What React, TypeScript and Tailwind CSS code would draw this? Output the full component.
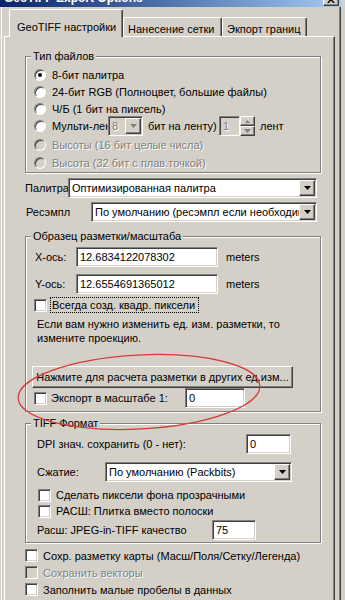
import type { ReactNode } from 'react';

// Classic Win2000 "GeoTIFF Export Options" dialog, clipped to the visible area.

const sunken =
  'border border-t-[#808080] border-l-[#808080] border-b-white border-r-white shadow-[inset_1px_1px_0_#404040,inset_-1px_-1px_0_#d4d0c8]';
const raised =
  'border border-t-white border-l-white border-b-[#404040] border-r-[#404040] shadow-[inset_-1px_-1px_0_#808080]';
const grayText = 'text-[#808080] [text-shadow:1px_1px_0_#fff]';

export default function App() {
  return (
    <div className="relative h-[600px] w-[345px] overflow-hidden bg-[#d4d0c8] font-['Liberation_Sans',Arial,sans-serif] text-[11px] leading-[14px] text-black">
      <div className="h-[600px] w-[341px] shadow-[inset_1px_0_0_#d4d0c8,inset_2px_0_0_#fff,inset_-1px_0_0_#404040,inset_-2px_0_0_#808080]">
        <TitleBar />

        <div className="flex h-[30px] items-end pl-[9px]">
          <Tab selected width="w-[114px]">GeoTIFF настройки</Tab>
          <Tab width="w-[99px]">Нанесение сетки</Tab>
          <Tab width="w-[85px]">Экпорт границ</Tab>
        </div>

        <div className="relative -mt-[1px] ml-[4px] h-[570px] w-[331px] border border-t-white border-l-white border-r-[#404040] border-b-[#404040] shadow-[inset_-1px_0_0_#808080]">
          <Group title="Тип файлов" className="mt-[12px] pb-[1px]">
            <div className="pt-[4px] pl-[8px]">
              <RadioRow h="h-[16px]" checked>8-бит палитра</RadioRow>
              <RadioRow h="h-[17px]">24-бит RGB (Полноцвет, большие файлы)</RadioRow>
              <RadioRow h="h-[17px]">Ч/Б (1 бит на пиксель)</RadioRow>
              <div className="flex h-[18px] items-center">
                <Radio />
                <span className="ml-[6px] w-[56px] overflow-hidden whitespace-nowrap">Мульти-ленточный</span>
                <Combo value="8" disabled className="w-[35px]" />
                <span className="ml-[5px] w-[71px] whitespace-nowrap">бит на ленту)</span>
                <div className={`flex h-[20px] w-[21px] items-center pl-[3px] bg-[#d4d0c8] ${sunken}`}>
                  <span className={grayText}>1</span>
                </div>
                <div className="flex h-[20px] w-[15px] flex-col">
                  <span className={`flex flex-1 items-center justify-center bg-[#d4d0c8] ${raised}`}>
                    <Arrow up gray />
                  </span>
                  <span className={`flex flex-1 items-center justify-center bg-[#d4d0c8] ${raised}`}>
                    <Arrow gray />
                  </span>
                </div>
                <span className="ml-[5px]">лент</span>
              </div>
              <RadioRow h="h-[19px]" disabled>Высоты (16 бит целые числа)</RadioRow>
              <RadioRow h="h-[17px]" disabled>Высота (32 бит с плав.точкой)</RadioRow>
            </div>
          </Group>

          <div className="mt-[5px] ml-[20px] flex h-[20px] w-[292px] items-center">
            <span className="w-[43px] shrink-0 whitespace-nowrap">Палитра</span>
            <Combo value="Оптимизированная палитра" className="min-w-0 flex-1" />
          </div>
          <div className="mt-[4px] ml-[21px] flex h-[20px] w-[291px] items-center">
            <span className="w-[65px] shrink-0">Ресэмпл</span>
            <Combo value="По умолчанию (ресэмпл если необходимо)" className="min-w-0 flex-1" />
          </div>

          <Group title="Образец разметки/масштаба" className="mt-[7px] pb-[3px]">
            <div className="pl-[9px]">
              <div className="mt-[4px] flex h-[20px] items-center">
                <span className="w-[41px]">X-ось:</span>
                <Field value="12.6834122078302" className="w-[142px]" />
                <span className="ml-[8px]">meters</span>
              </div>
              <div className="mt-[7px] flex h-[20px] items-center">
                <span className="w-[41px]">Y-ось:</span>
                <Field value="12.6554691365012" className="w-[142px]" />
                <span className="ml-[8px]">meters</span>
              </div>
              <div className="mt-[3px] -ml-[1px] flex h-[16px] items-center">
                <Check />
                <span className="ml-[3px] w-[149px] overflow-hidden whitespace-nowrap border border-dotted border-black px-[1px]">
                  Всегда созд. квадр. пиксели
                </span>
              </div>
              <p className="mt-[4px] pl-[2px]">
                Если вам нужно изменить ед. изм. разметки, то
                <br />
                измените проекцию.
              </p>
              <button
                className={`mt-[21px] -ml-[3px] flex h-[22px] w-[261px] items-center justify-center overflow-hidden whitespace-nowrap bg-[#d4d0c8] ${raised}`}
              >
                Нажмите для расчета разметки в других ед.изм...
              </button>
              <div className="-ml-[1px] flex h-[20px] items-center">
                <Check />
                <span className="ml-[4px] w-[134px]">Экспорт в масштабе 1:</span>
                <Field value="0" className="w-[60px]" />
              </div>
            </div>
          </Group>

          <Group title="TIFF Формат" className="mt-[4px] pb-[2px]">
            <div className="pl-[11px]">
              <div className="mt-[3px] flex h-[21px] items-center">
                <span className="w-[209px]">DPI знач. сохранить (0 - нет):</span>
                <Field value="0" className="w-[45px]" />
              </div>
              <div className="mt-[8px] flex h-[20px] items-center">
                <span className="w-[68px]">Сжатие:</span>
                <Combo value="По умолчанию (Packbits)" className="w-[187px]" />
              </div>
              <div className="mt-[5px] pl-[1px]">
                <CheckRow h="h-[16px]">Сделать пиксели фона прозрачными</CheckRow>
                <CheckRow h="h-[16px]">РАСШ: Плитка вместо полоски</CheckRow>
              </div>
              <div className="mt-[1px] flex h-[20px] items-center">
                <span className="w-[175px]">Расш: JPEG-in-TIFF качество</span>
                <Field value="75" className="w-[44px]" />
              </div>
            </div>
          </Group>

          <div className="mt-[4px] ml-[20px]">
            <CheckRow h="h-[17px]">Сохр. разметку карты (Масш/Поля/Сетку/Легенда)</CheckRow>
            <CheckRow h="h-[17px]" disabled>Сохранить векторы</CheckRow>
            <CheckRow h="h-[17px]">Заполнить малые пробелы в данных</CheckRow>
            <CheckRow h="h-[17px]">Сохранить TFW (World) файл</CheckRow>
          </div>
        </div>
      </div>

      {/* someone's red pen mark around the scale export controls */}
      <svg className="pointer-events-none absolute left-0 top-0" width="345" height="600">
        <ellipse
          cx="139"
          cy="392"
          rx="121"
          ry="37"
          transform="rotate(-3 139 392)"
          fill="none"
          stroke="#d23a3a"
          strokeWidth="1.2"
        />
      </svg>
    </div>
  );
}

function TitleBar() {
  return (
    <div className="flex h-[7px] overflow-hidden bg-gradient-to-r from-[#0a246a] to-[#a6caf0] pl-[4px] pr-[2px]">
      <span className="-mt-[9px] flex-1 whitespace-nowrap text-[12px] font-bold leading-[14px] text-white">
        GeoTIFF Export Options
      </span>
      <span className={`-mt-[8px] flex h-[14px] w-[16px] items-center justify-center bg-[#d4d0c8] ${raised}`}>
        <svg width="8" height="7" viewBox="0 0 8 7">
          <path d="M0 0h2l2 2.5L6 0h2L5 3.5 8 7H6L4 4.5 2 7H0l3-3.5z" fill="#000" />
        </svg>
      </span>
    </div>
  );
}

function Tab({ children, selected, width }: { children: ReactNode; selected?: boolean; width: string }) {
  return (
    <div
      className={`${width} rounded-t-[2px] border border-b-0 border-t-white border-l-white border-r-[#404040] bg-[#d4d0c8] whitespace-nowrap shadow-[inset_-1px_0_0_#808080] ${
        selected ? 'relative z-10 h-[28px] pl-[7px] pt-[10px]' : 'h-[20px] pl-[4px] pt-[4px]'
      }`}
    >
      {children}
    </div>
  );
}

function Group({ title, className, children }: { title: string; className?: string; children: ReactNode }) {
  return (
    <fieldset
      className={`ml-[20px] w-[296px] border border-[#808080] shadow-[inset_1px_1px_0_#fff,1px_1px_0_#fff] ${className ?? ''}`}
    >
      <legend className="ml-[5px] bg-[#d4d0c8] px-[2px] leading-[14px]">{title}</legend>
      {children}
    </fieldset>
  );
}

function Radio({ checked, disabled }: { checked?: boolean; disabled?: boolean }) {
  return (
    <span
      className={`flex h-[12px] w-[12px] shrink-0 items-center justify-center rounded-full border border-t-[#808080] border-l-[#808080] border-b-white border-r-white shadow-[inset_1px_1px_0_#404040] ${
        disabled ? 'bg-[#d4d0c8]' : 'bg-white'
      }`}
    >
      {checked && <span className="h-[4px] w-[4px] rounded-full bg-black" />}
    </span>
  );
}

function RadioRow({ children, h, checked, disabled }: { children: ReactNode; h: string; checked?: boolean; disabled?: boolean }) {
  return (
    <div className={`flex ${h} items-center`}>
      <Radio checked={checked} disabled={disabled} />
      <span className={`ml-[6px] whitespace-nowrap ${disabled ? grayText : ''}`}>{children}</span>
    </div>
  );
}

function Check({ disabled }: { disabled?: boolean }) {
  return <span className={`h-[13px] w-[13px] shrink-0 ${sunken} ${disabled ? 'bg-[#d4d0c8]' : 'bg-white'}`} />;
}

function CheckRow({ children, h, disabled }: { children: ReactNode; h: string; disabled?: boolean }) {
  return (
    <div className={`flex ${h} items-center`}>
      <Check disabled={disabled} />
      <span className={`ml-[5px] whitespace-nowrap ${disabled ? grayText : ''}`}>{children}</span>
    </div>
  );
}

function Field({ value, className }: { value: string; className?: string }) {
  return (
    <div className={`flex h-[20px] items-center bg-white pl-[3px] ${sunken} ${className ?? ''}`}>{value}</div>
  );
}

function Arrow({ up, gray }: { up?: boolean; gray?: boolean }) {
  const fill = gray ? '#808080' : '#000';
  return up ? (
    <svg width="5" height="3" viewBox="0 0 5 3">
      <path d="M2.5 0L5 3H0z" fill={fill} />
    </svg>
  ) : (
    <svg width="7" height="4" viewBox="0 0 7 4">
      <path d="M0 0h7L3.5 4z" fill={fill} />
    </svg>
  );
}

function Combo({ value, className, disabled }: { value: string; className?: string; disabled?: boolean }) {
  return (
    <div className={`flex h-[20px] p-[1px] ${sunken} ${disabled ? 'bg-[#d4d0c8]' : 'bg-white'} ${className ?? ''}`}>
      <span className={`min-w-0 flex-1 overflow-hidden whitespace-nowrap pl-[2px] leading-[16px] ${disabled ? grayText : ''}`}>
        {value}
      </span>
      <span className={`flex w-[16px] shrink-0 items-center justify-center bg-[#d4d0c8] ${raised}`}>
        <Arrow gray={disabled} />
      </span>
    </div>
  );
}
